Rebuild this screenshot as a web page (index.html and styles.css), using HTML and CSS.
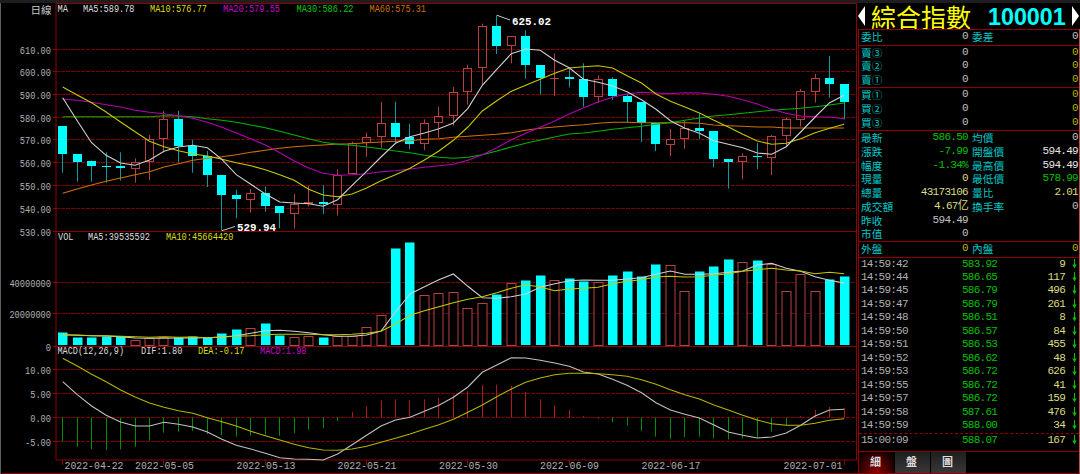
FILE: index.html
```html
<!DOCTYPE html>
<html lang="zh-Hant">
<head>
    <meta charset="UTF-8">
    <title>綜合指數 100001</title>
    <link rel="stylesheet" href="styles.css">
</head>
<body>

<div class="top-bar"></div>
<div class="screen">
    <svg class="chart" id="chart" width="858" height="471" viewBox="0 3 858 471"></svg>

    <div class="quote">
        <div class="title">
            <svg width="7" height="20" viewBox="0 0 7 20"><path d="M7 0V20L0 10Z" fill="#fff"/></svg>
            <span class="name">綜合指數</span>
            <span class="code">100001</span>
            <svg width="7" height="20" viewBox="0 0 7 20"><path d="M0 0V20L7 10Z" fill="#fff"/></svg>
        </div>
        <div class="panel">
            <div class="block single">
                <div class="row"><b>委比</b><span>0</span><b>委差</b><span>0</span></div>
            </div>
            <div class="block orders">
                <div class="row"><b>賣③</b><span>0</span><b></b><span class="gold">0</span></div>
                <div class="row"><b>賣②</b><span>0</span><b></b><span class="gold">0</span></div>
                <div class="row"><b>賣①</b><span>0</span><b></b><span class="gold">0</span></div>
            </div>
            <div class="block orders">
                <div class="row"><b>買①</b><span>0</span><b></b><span class="gold">0</span></div>
                <div class="row"><b>買②</b><span>0</span><b></b><span class="gold">0</span></div>
                <div class="row"><b>買③</b><span>0</span><b></b><span class="gold">0</span></div>
            </div>
            <div class="block stats">
                <div class="row"><b>最新</b><span class="down">586.50</span><b>均價</b><span>0</span></div>
                <div class="row"><b>漲跌</b><span class="down">-7.99</span><b>開盤價</b><span class="white">594.49</span></div>
                <div class="row"><b>幅度</b><span class="down">-1.34%</span><b>最高價</b><span class="white">594.49</span></div>
                <div class="row"><b>現量</b><span class="pale">0</span><b>最低價</b><span class="down">578.99</span></div>
                <div class="row"><b>總量</b><span class="pale">43173106</span><b>量比</b><span class="pale">2.01</span></div>
                <div class="row"><b>成交額</b><span class="pale">4.67亿</span><b>換手率</b><span>0</span></div>
                <div class="row"><b>昨收</b><span>594.49</span><b></b><span></span></div>
                <div class="row"><b>市值</b><span>0</span><b></b><span></span></div>
            </div>
            <div class="block single">
                <div class="row"><b>外盤</b><span class="gold">0</span><b>內盤</b><span class="gold">0</span></div>
            </div>
            <div class="block ticks" id="ticks"></div>
            <div class="tabs">
                <div class="tab active">細</div>
                <div class="tab">盤</div>
                <div class="tab">圖</div>
            </div>
        </div>
    </div>
</div>

<script src="chart.js"></script>
</body>
</html>
```
FILE: styles.css
```css
body {
    margin: 0;
    width: 1080px;
    height: 474px;
    overflow: hidden;
    background-color: #000;
    color: #c0c0c0;
    font-family: "Liberation Mono", "Noto Sans CJK TC", monospace;
}
.top-bar {
    height: 3px;
    background-color: #1e1e20;
}
.screen {
    display: flex;
    height: 471px;
}
.chart {
    flex: none;
    display: block;
}

/* chart */
.edge {
    stroke: #5a6060;
}
.frame {
    stroke: #900000;
    fill: none;
}
.grid {
    stroke: #800000;
    stroke-dasharray: 4 1;
}
.line {
    fill: none;
    stroke-width: 1.1;
}
.up {
    stroke: #b84040;
    fill: none;
}
.up-bar {
    stroke: #b84040;
    fill: #000;
}
.wick-down {
    stroke: #00a0a0;
}
.down-bar {
    fill: #00ffff;
}
.hist-up {
    stroke: #b01818;
}
.hist-down {
    stroke: #009000;
}
.axis {
    font-size: 11px;
    fill: #b0b0b0;
}
.legend {
    font-size: 10px;
}
.period {
    font-family: "Noto Sans CJK TC", sans-serif;
    font-size: 10.5px;
    fill: #c8c8c8;
}
.mark {
    font-size: 11.5px;
    font-weight: bold;
    fill: #fff;
}
.pointer {
    stroke: #c8c8c8;
}

/* quote panel */
.quote {
    width: 222px;
    display: flex;
    flex-direction: column;
}
.title {
    display: flex;
    align-items: center;
    height: 26px;
    padding-right: 1px;
}
.name {
    margin-left: 6px;
    width: 100px;
    font-family: "Noto Sans CJK TC", sans-serif;
    font-size: 25px;
    line-height: 26px;
    color: #ffff00;
}
.code {
    margin: 2px 6px 0 17px;
    width: 78px;
    font-family: "Liberation Sans", sans-serif;
    font-size: 23.3px;
    font-weight: bold;
    line-height: 26px;
    color: #00ffff;
}
.panel {
    flex: 1;
    box-sizing: border-box;
    border-left: 1px solid #900000;
    border-right: 1px solid #b85050;
    border-bottom: 1px solid #900000;
}
.block {
    box-sizing: border-box;
    border-top: 1px solid #900000;
    display: flex;
    flex-direction: column;
}
.single {
    height: 15.5px;
}
.orders {
    height: 42.75px;
}
.stats {
    height: 111px;
}
.row {
    flex: 1;
    display: grid;
    grid-template-columns: 36px 71px 41px 1fr;
    align-items: start;
    padding: 0 1px 0 2px;
    font-size: 11px;
    line-height: 13px;
    letter-spacing: -0.7px;
}
.row b {
    font-family: "Noto Sans CJK TC", sans-serif;
    font-weight: normal;
    font-size: 10.7px;
    letter-spacing: 0;
    color: #00c8c8;
    white-space: nowrap;
}
.row b:nth-child(3) {
    padding-left: 4px;
}
.row span {
    text-align: right;
    white-space: nowrap;
}
.row .gold {
    color: #b4b400;
}
.row .down, .tick .down {
    color: #00c000;
}
.row .white {
    color: #e6e6e6;
}
.row .pale, .tick .pale {
    color: #dcdc82;
}
.ticks {
    height: 194.5px;
    padding-bottom: 4px;
}
.tick {
    flex: 1;
    box-sizing: border-box;
    display: grid;
    grid-template-columns: 101px 60px 43px 1fr;
    align-items: start;
    padding-left: 2px;
    font-size: 11px;
    line-height: 12px;
    letter-spacing: -0.75px;
    color: #b0b0b0;
}
.tick .pale {
    text-align: right;
}
.tick svg {
    margin: 1px 0 0 7px;
}
.tick:last-child {
    border-top: 1px dashed #900000;
}
.tabs {
    display: flex;
    gap: 1px;
    height: 21px;
    border-top: 1px solid #900000;
}
.tab {
    width: 35px;
    box-sizing: border-box;
    padding-right: 2px;
    text-align: center;
    font-family: "Noto Sans CJK TC", sans-serif;
    font-size: 11px;
    font-weight: bold;
    line-height: 18px;
    color: #dcdcdc;
    background: linear-gradient(#1e1e1e, #383838);
}
.tab.active {
    background: radial-gradient(ellipse at 50% 100%, #900000, #100000 85%);
}
```
FILE: chart.js
```js
// Values are stored in thirds of a pixel
const X0 = 62.7;
const STEP = 14.47;
const LOWER = 230;

// direction, high, body top, body bottom, low
const candles = [
    ['D', 378, 378, 462, 518], ['D', 462, 462, 486, 545], ['D', 482, 484, 497, 545], ['D', 457, 498, 500, 548],
    ['D', 457, 497, 504, 542], ['U', 475, 485, 506, 548], ['U', 405, 416, 487, 540], ['U', 334, 357, 417, 457],
    ['D', 333, 357, 438, 487], ['D', 420, 437, 467, 518], ['D', 453, 467, 525, 561], ['D', 525, 525, 585, 692],
    ['D', 569, 585, 597, 654], ['U', 567, 580, 599, 638], ['D', 559, 579, 617, 635], ['D', 618, 618, 640, 685],
    ['U', 582, 611, 643, 686], ['U', 558, 605, 611, 620], ['D', 556, 605, 612, 642], ['U', 508, 524, 614, 647],
    ['U', 425, 430, 523, 523], ['U', 398, 412, 430, 470], ['U', 306, 370, 412, 443], ['D', 306, 370, 410, 430],
    ['D', 371, 410, 431, 447], ['U', 358, 370, 433, 450], ['U', 320, 349, 370, 413], ['U', 261, 276, 349, 377],
    ['U', 194, 205, 277, 314], ['U', 71, 79, 205, 255], ['D', 46, 79, 137, 162], ['U', 109, 109, 139, 190],
    ['D', 91, 109, 196, 236], ['D', 196, 196, 235, 283], ['U', 160, 233, 235, 288], ['D', 205, 232, 236, 262],
    ['D', 190, 237, 290, 320], ['U', 226, 237, 292, 308], ['D', 232, 237, 288, 300], ['D', 282, 288, 305, 368],
    ['D', 306, 306, 368, 426], ['D', 370, 370, 433, 453], ['U', 387, 416, 436, 468], ['U', 362, 385, 418, 446],
    ['D', 341, 384, 393, 417], ['D', 393, 393, 476, 502], ['D', 478, 478, 485, 566], ['U', 460, 469, 487, 538],
    ['D', 429, 469, 471, 507], ['U', 405, 408, 473, 525], ['U', 354, 358, 409, 440], ['U', 267, 273, 359, 380],
    ['U', 222, 235, 275, 308], ['D', 168, 234, 252, 293], ['D', 252, 252, 305, 358]
];

const volumes = [309, 325, 325, 322, 321, 330, 325, 322, 325, 320, 325, 312, 301, 294, 283, 319, 322, 319, 325, 318, 319, 292, 256, 58, 40, 194, 190, 187, 233, 220, 196, 160, 153, 137, 151, 148, 156, 157, 138, 127, 141, 106, 106, 184, 127, 111, 91, 97, 94, 102, 184, 133, 184, 151, 140];

const hist = [633, 650, 657, 660, 658, 650, 632, 608, 605, 602, 612, 615, 620, 617, 614, 617, 609, 599, 594, 573, 546, 529, 511, 508, 511, 508, 503, 495, 484, 465, 464, 468, 486, 508, 526, 540, 558, 566, 577, 587, 602, 620, 626, 622, 620, 625, 628, 625, 621, 605, 587, 558, 540, 531, 534];

const priceLines = [
    ['#d07000', [580, 567, 555, 544, 534, 524, 515, 501, 491, 481, 475, 470, 464, 457, 451, 445, 440, 437, 435, 432, 431, 428, 426, 424, 422, 418, 416, 412, 409, 406, 403, 398, 391, 385, 381, 377, 374, 370, 367, 367, 368, 368, 368, 368, 370, 375, 377, 379, 381, 381, 384, 384, 384, 384, 384]],
    ['#00b400', [350, 350, 350, 350, 350, 350, 350, 347, 348, 350, 356, 361, 367, 375, 383, 394, 405, 416, 427, 433, 436, 441, 446, 453, 458, 466, 472, 475, 472, 464, 453, 441, 430, 420, 411, 402, 399, 394, 388, 383, 379, 373, 368, 361, 354, 348, 344, 340, 335, 331, 328, 325, 320, 315, 309]],
    ['#b400b4', [298, 301, 307, 314, 321, 331, 337, 341, 347, 355, 367, 382, 399, 416, 435, 458, 483, 504, 520, 526, 524, 521, 515, 512, 507, 502, 497, 493, 481, 464, 443, 419, 400, 382, 363, 342, 323, 306, 292, 282, 277, 279, 281, 278, 279, 283, 289, 299, 312, 328, 340, 348, 350, 351, 356]],
    ['#c8c800', [261, 285, 308, 336, 366, 395, 424, 440, 452, 462, 468, 478, 488, 497, 509, 524, 541, 568, 585, 590, 582, 564, 542, 524, 505, 480, 453, 421, 381, 333, 302, 274, 256, 238, 220, 204, 200, 197, 204, 227, 249, 282, 304, 321, 339, 361, 381, 403, 423, 433, 430, 416, 398, 385, 373]],
    ['#d0d0d0', [293, 362, 428, 466, 489, 496, 480, 454, 441, 436, 443, 478, 524, 553, 582, 606, 609, 611, 619, 599, 556, 514, 471, 430, 410, 399, 386, 369, 325, 256, 208, 161, 147, 151, 181, 203, 238, 247, 258, 275, 299, 328, 362, 385, 400, 422, 433, 443, 459, 463, 440, 396, 351, 308, 286]]
];

const lowerLines = [
    ['#d0d0d0', [314, 316, 317, 318, 320, 324, 325, 325, 324, 324, 323, 321, 317, 310, 302, 301, 304, 308, 314, 319, 319, 315, 303, 246, 192, 170, 149, 132, 169, 203, 205, 200, 192, 172, 161, 152, 150, 151, 151, 147, 143, 133, 123, 133, 133, 131, 127, 123, 105, 100, 115, 124, 140, 151, 159]],
    ['#c8c800', [315, 315, 317, 317, 319, 320, 322, 320, 322, 321, 323, 321, 319, 317, 314, 313, 313, 313, 314, 314, 313, 310, 304, 282, 256, 242, 230, 218, 208, 200, 188, 175, 164, 171, 182, 177, 175, 172, 161, 154, 149, 141, 139, 141, 140, 136, 131, 124, 119, 115, 120, 123, 131, 127, 131]],
    ['#c0c0c0', [455, 494, 528, 556, 576, 588, 588, 577, 583, 591, 606, 628, 646, 657, 670, 683, 687, 688, 690, 672, 644, 616, 588, 570, 562, 544, 526, 502, 471, 427, 405, 383, 384, 391, 399, 409, 426, 432, 448, 466, 488, 518, 540, 553, 564, 585, 606, 616, 624, 621, 609, 586, 558, 540, 538]],
    ['#b4b400', [385, 408, 433, 455, 480, 501, 519, 532, 542, 550, 563, 575, 588, 604, 617, 630, 643, 653, 660, 661, 657, 649, 637, 625, 612, 598, 584, 568, 547, 525, 500, 477, 457, 444, 434, 430, 430, 431, 434, 439, 449, 463, 479, 494, 507, 525, 540, 556, 570, 581, 586, 586, 580, 571, 566]]
];

// text, x, baseline, width, colour
const legends = [
    ['MA', 57.5, 11.5, 10.5, '#dcdcdc'], ['MA5:589.78', 83, 11.5, 51.5, '#dcdcdc'],
    ['MA10:576.77', 150, 11.5, 57, '#dcdc00'], ['MA20:579.55', 223, 11.5, 57, '#c800c8'],
    ['MA30:586.22', 296.5, 11.5, 57, '#00c800'], ['MA60:575.31', 369.5, 11.5, 56.5, '#d07000'],
    ['VOL', 58, 240, 15.5, '#dcdcdc'], ['MA5:39535592', 88, 240, 62, '#dcdcdc'],
    ['MA10:45664420', 166, 240, 67.5, '#dcdc00'],
    ['MACD(12,26,9)', 57.5, 354, 66.5, '#dcdcdc'], ['DIF:1.80', 141, 354, 41.5, '#dcdcdc'],
    ['DEA:-0.17', 198, 354, 46.5, '#dcdc00'], ['MACD:1.98', 260, 354, 46.5, '#c800c8']
];

// text, gridline y
const scale = [
    ['610.00', 49.5], ['600.00', 71.5], ['590.00', 94.5], ['580.00', 117.5], ['570.00', 139.5],
    ['560.00', 162.5], ['550.00', 185.5], ['540.00', 208.5], ['530.00', 231.5],
    ['40000000', 282.5], ['20000000', 313.5], ['0', 346.5],
    ['10.00', 369.5], ['5.00', 393.5], ['0.00', 417.5], ['-5.00', 441.5]
];

// text, x, tick index
const dates = [
    ['2022-04-22', 64.5, 0], ['2022-05-05', 135, 7], ['2022-05-13', 236.5, 14], ['2022-05-21', 337.5, 21],
    ['2022-05-30', 439, 28], ['2022-06-09', 540, 35], ['2022-06-17', 641.5, 42], ['2022-07-01', 783.5, 54]
];

const px = i => X0 + STEP * i;
const mid = i => Math.floor(px(i)) + 0.5;

function line(cls, x1, y1, x2, y2) {
    return `<line class="${cls}" x1="${x1}" y1="${y1}" x2="${x2}" y2="${y2}"/>`;
}

function text(cls, s, x, y, w, colour) {
    const fill = colour ? ` fill="${colour}"` : '';
    return `<text class="${cls}" x="${x}" y="${y}" textLength="${w}" lengthAdjust="spacingAndGlyphs"${fill}>${s}</text>`;
}

function curve([colour, values], base) {
    const points = values.map((v, i) => px(i).toFixed(1) + ',' + (base + v / 3).toFixed(1)).join(' ');
    return `<polyline class="line" stroke="${colour}" points="${points}"/>`;
}

function drawGrid() {
    let out = line('edge', 0.5, 3, 0.5, 474);
    scale.forEach(([label, y]) => {
        const w = label.length * 5.2;
        out += text('axis', label, 51 - w, y + 4, w);
        out += line('frame', 53, y, 56, y);
        if (label !== '530.00' && label !== '0') {
            out += line('grid', 56, y, 857, y);
        }
    });
    out += '<rect class="frame" x="56" y="3.5" width="800.5" height="456.5"/>';
    out += line('frame', 56, 231.5, 857, 231.5);
    out += line('frame', 56, 346.5, 857, 346.5);
    out += line('frame', 2, 473.5, 858, 473.5);
    dates.forEach(([label, x, i]) => {
        out += line('frame', mid(i), 460, mid(i), 465);
        out += text('axis', label, x, 469, 59);
    });
    return out;
}

function drawCandles() {
    let out = '';
    candles.forEach(([dir, high, top, bottom, low], i) => {
        const x = mid(i);
        const t = Math.round(top / 3);
        const b = Math.max(t + 1, Math.round(bottom / 3));
        if (dir === 'D') {
            out += line('wick-down', x, high / 3, x, low / 3);
            out += `<rect class="down-bar" x="${x - 4.5}" y="${t}" width="9" height="${b - t}"/>`;
        } else if (b - t < 2) {
            // open equals close
            out += line('up', x, high / 3, x, low / 3);
            out += line('up', x - 4.5, t + 0.5, x + 4.5, t + 0.5);
        } else {
            out += line('up', x, high / 3, x, t);
            out += line('up', x, b, x, low / 3);
            out += `<rect class="up" x="${x - 4}" y="${t + 0.5}" width="8" height="${b - t - 1}"/>`;
        }
    });
    return out;
}

function drawVolumes() {
    let out = '';
    volumes.forEach((v, i) => {
        const x = mid(i);
        const t = Math.round(LOWER + v / 3);
        if (candles[i][0] === 'D') {
            out += `<rect class="down-bar" x="${x - 4.5}" y="${t - 0.5}" width="9.5" height="${345.5 - t}"/>`;
        } else {
            out += `<rect class="up-bar" x="${x - 4.5}" y="${t + 0.5}" width="9" height="${345 - t}"/>`;
        }
    });
    return out;
}

function drawHist() {
    return hist.map((v, i) => {
        const up = i >= 20 && i <= 36 || i >= 51;
        return line(up ? 'hist-up' : 'hist-down', mid(i), 417.5, mid(i), LOWER + v / 3);
    }).join('');
}

function drawLabels() {
    let out = '<text class="period" x="30.5" y="14">日線</text>';
    legends.forEach(([s, x, y, w, colour]) => {
        out += text('legend', s, x, y, w, colour);
    });
    out += line('pointer', 497, 15.3, 510, 20);
    out += text('mark', '625.02', 512, 24.5, 39);
    out += line('pointer', 222, 230.7, 235, 226.5);
    out += text('mark', '529.94', 237, 231, 39);
    return out;
}

document.getElementById('chart').innerHTML =
    drawGrid() + drawCandles() + drawVolumes() + drawHist() +
    priceLines.map(l => curve(l, 0)).join('') +
    lowerLines.map(l => curve(l, LOWER)).join('') +
    drawLabels();

// time, price, volume
const ticks = [
    ['14:59:42', '583.92', 9], ['14:59:44', '586.65', 117], ['14:59:45', '586.79', 496], ['14:59:47', '586.79', 261],
    ['14:59:48', '586.51', 8], ['14:59:50', '586.57', 84], ['14:59:51', '586.53', 455], ['14:59:52', '586.62', 48],
    ['14:59:53', '586.72', 626], ['14:59:55', '586.72', 41], ['14:59:57', '586.72', 159], ['14:59:58', '587.61', 476],
    ['14:59:59', '588.00', 34], ['15:00:09', '588.07', 167]
];

document.getElementById('ticks').innerHTML = ticks.map(([time, price, vol]) => `
    <div class="tick">
        <span>${time}</span><span class="down">${price}</span><span class="pale">${vol}</span>
        <svg width="5" height="10" viewBox="0 0 5 10"><path d="M2.5 0V6" stroke="#00c000"/><path d="M0.3 5.5H4.7L2.5 9.5Z" fill="#00c000"/></svg>
    </div>`).join('');
```
